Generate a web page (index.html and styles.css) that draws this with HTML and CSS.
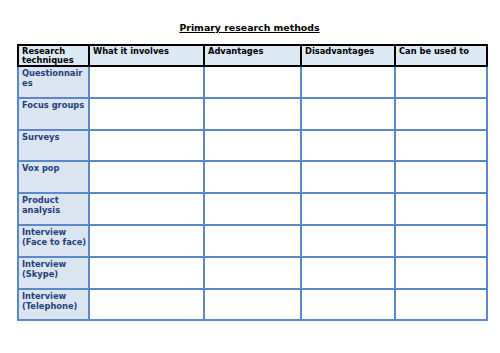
FILE: index.html
```html
<!DOCTYPE html>
<html>
<head>
<meta charset="utf-8">
<link rel="stylesheet" href="styles.css">
</head>
<body>
<div class="page">
  <h1 class="title">Primary research methods</h1>
  <table class="grid">
    <colgroup>
      <col class="c1"><col class="c2"><col class="c3"><col class="c4"><col class="c5">
    </colgroup>
    <thead>
      <tr>
        <th>Research techniques</th>
        <th>What it involves</th>
        <th>Advantages</th>
        <th>Disadvantages</th>
        <th>Can be used to</th>
      </tr>
    </thead>
    <tbody>
      <tr><td class="label">Questionnair<br>es</td><td></td><td></td><td></td><td></td></tr>
      <tr><td class="label">Focus groups</td><td></td><td></td><td></td><td></td></tr>
      <tr><td class="label">Surveys</td><td></td><td></td><td></td><td></td></tr>
      <tr><td class="label">Vox pop</td><td></td><td></td><td></td><td></td></tr>
      <tr><td class="label">Product analysis</td><td></td><td></td><td></td><td></td></tr>
      <tr><td class="label">Interview (Face to face)</td><td></td><td></td><td></td><td></td></tr>
      <tr><td class="label">Interview (Skype)</td><td></td><td></td><td></td><td></td></tr>
      <tr><td class="label">Interview (Telephone)</td><td></td><td></td><td></td><td></td></tr>
    </tbody>
  </table>
</div>
</body>
</html>
```

FILE: styles.css
```css
html, body {
  margin: 0;
  padding: 0;
  background: #ffffff;
}
.page {
  width: 500px;
  height: 353px;
  padding: 22px 0 0 17px;
  box-sizing: border-box;
  font-family: "DejaVu Sans", sans-serif;
}
.title {
  margin: 0 0 10px 0;
  width: 465px;
  text-align: center;
  font-size: 9.4px;
  line-height: 12px;
  font-weight: bold;
  text-decoration: underline;
  color: #000;
}
.grid {
  border-collapse: collapse;
  table-layout: fixed;
  width: 469px;
}
.c1 { width: 71px; }
.c2 { width: 115px; }
.c3 { width: 97px; }
.c4 { width: 94px; }
.c5 { width: 92px; }
.grid th {
  height: 12px;
  border: 2px solid #000;
  background: #dde8f5;
  text-align: left;
  vertical-align: top;
  font-size: 8.3px;
  line-height: 9px;
  font-weight: bold;
  color: #000;
  padding: 1px 1px 0 3px;
}
.grid td {
  height: 27.8px;
  border: 2px solid #5a88c8;
  padding: 1px 1px 1px 3px;
  vertical-align: top;
}
.grid td.label {
  background: #dbe5f1;
  color: #1f3f7a;
  font-size: 8.3px;
  line-height: 10px;
  font-weight: bold;
}
```
